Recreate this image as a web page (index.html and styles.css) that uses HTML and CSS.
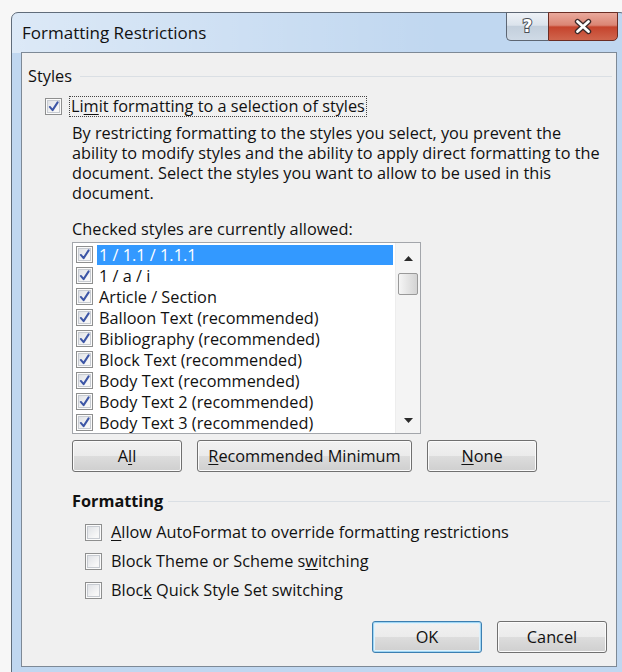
FILE: index.html
```html
<!DOCTYPE html>
<html lang="en">
<head>
<meta charset="utf-8">
<title>Formatting Restrictions</title>
<link rel="stylesheet" href="styles.css">
</head>
<body>
<div class="window">
  <div class="titlebar">
    <span class="title">Formatting Restrictions</span>
    <div class="caption-buttons">
      <span class="cap help"><span class="help-glyph">?</span></span>
      <span class="cap close">
        <svg width="22" height="17" viewBox="0 0 22 17" aria-hidden="true">
          <path d="M5.5 3.5 L16.5 13.5 M16.5 3.5 L5.5 13.5" stroke="#3b2a2a" stroke-width="5.4" stroke-linecap="round"/>
          <path d="M5.5 3.5 L16.5 13.5 M16.5 3.5 L5.5 13.5" stroke="#ffffff" stroke-width="2.8" stroke-linecap="round"/>
        </svg>
      </span>
    </div>
  </div>

  <div class="client">
    <section class="group">
      <div class="group-head"><span class="group-title">Styles</span><span class="rule"></span></div>

      <label class="check-row main-check">
        <span class="box checked"><svg viewBox="0 0 12 12"><path d="M2 6.5 L5 10 L10.5 1.5"/></svg></span>
        <span class="focus">Li<u>m</u>it formatting to a selection of styles</span>
      </label>

      <div class="indent">
        <p class="desc">By restricting formatting to the styles you select, you prevent the ability to modify styles and the ability to apply direct formatting to the document. Select the styles you want to allow to be used in this document.</p>
        <p class="list-label">Checked styles are currently allowed:</p>

        <div class="listbox">
          <ul class="items">
            <li class="item selected"><span class="box small checked"><svg viewBox="0 0 12 12"><path d="M2 6.5 L5 10 L10.5 1.5"/></svg></span><span class="item-text">1 / 1.1 / 1.1.1</span></li>
            <li class="item"><span class="box small checked"><svg viewBox="0 0 12 12"><path d="M2 6.5 L5 10 L10.5 1.5"/></svg></span><span class="item-text">1 / a / i</span></li>
            <li class="item"><span class="box small checked"><svg viewBox="0 0 12 12"><path d="M2 6.5 L5 10 L10.5 1.5"/></svg></span><span class="item-text">Article / Section</span></li>
            <li class="item"><span class="box small checked"><svg viewBox="0 0 12 12"><path d="M2 6.5 L5 10 L10.5 1.5"/></svg></span><span class="item-text">Balloon Text (recommended)</span></li>
            <li class="item"><span class="box small checked"><svg viewBox="0 0 12 12"><path d="M2 6.5 L5 10 L10.5 1.5"/></svg></span><span class="item-text">Bibliography (recommended)</span></li>
            <li class="item"><span class="box small checked"><svg viewBox="0 0 12 12"><path d="M2 6.5 L5 10 L10.5 1.5"/></svg></span><span class="item-text">Block Text (recommended)</span></li>
            <li class="item"><span class="box small checked"><svg viewBox="0 0 12 12"><path d="M2 6.5 L5 10 L10.5 1.5"/></svg></span><span class="item-text">Body Text (recommended)</span></li>
            <li class="item"><span class="box small checked"><svg viewBox="0 0 12 12"><path d="M2 6.5 L5 10 L10.5 1.5"/></svg></span><span class="item-text">Body Text 2 (recommended)</span></li>
            <li class="item"><span class="box small checked"><svg viewBox="0 0 12 12"><path d="M2 6.5 L5 10 L10.5 1.5"/></svg></span><span class="item-text">Body Text 3 (recommended)</span></li>
          </ul>
          <div class="scrollbar">
            <span class="arrow up"><svg width="9" height="5" viewBox="0 0 9 5"><path d="M0 5 L4.5 0 L9 5 Z"/></svg></span>
            <span class="track"><span class="thumb"></span></span>
            <span class="arrow down"><svg width="9" height="5" viewBox="0 0 9 5"><path d="M0 0 L9 0 L4.5 5 Z"/></svg></span>
          </div>
        </div>

        <div class="list-buttons">
          <span class="btn narrow">A<u>l</u>l</span>
          <span class="btn wide"><u>R</u>ecommended Minimum</span>
          <span class="btn narrow"><u>N</u>one</span>
        </div>
      </div>
    </section>

    <section class="group formatting">
      <div class="group-head sub"><span class="group-title bold">Formatting</span><span class="rule"></span></div>
      <div class="options">
        <label class="check-row"><span class="box"></span><span class="opt-text"><u>A</u>llow AutoFormat to override formatting restrictions</span></label>
        <label class="check-row"><span class="box"></span><span class="opt-text">Block Theme or Scheme s<u>w</u>itching</span></label>
        <label class="check-row"><span class="box"></span><span class="opt-text">Bloc<u>k</u> Quick Style Set switching</span></label>
      </div>
    </section>

    <div class="dialog-buttons">
      <span class="btn narrow default">OK</span>
      <span class="btn narrow">Cancel</span>
    </div>
  </div>
</div>
</body>
</html>
```

FILE: styles.css
```css
html, body {
  margin: 0;
  height: 100%;
}

body {
  background: #f7f7f7;
  overflow: hidden;
  font-family: "Open Sans", "Noto Sans", sans-serif;
  font-size: 16.3px;
  color: #111;
}

u {
  text-decoration-thickness: 1px;
  text-underline-offset: 2px;
}

/* ---------- window frame ---------- */
.window {
  margin: 12px 0 0 11px;
  width: 596px;
  height: 654px;
  padding: 0 9px 6px;
  border: 1px solid #606c7a;
  border-radius: 7px 7px 0 0;
  background:
    linear-gradient(90deg, rgba(255, 255, 255, 0.45), rgba(255, 255, 255, 0) 70%) top / 100% 40px no-repeat,
    #c0d7f0;
  display: flex;
  flex-direction: column;
}

.titlebar {
  height: 39px;
  display: flex;
  justify-content: space-between;
  align-items: flex-start;
}

.title {
  margin: 10px 0 0 1px;
  font-size: 17px;
  line-height: 20px;
  color: #111;
}

.caption-buttons {
  display: flex;
  margin: -1px -1px 0 0;
}

.cap {
  height: 27px;
  border: 1px solid #5d6673;
  display: flex;
  align-items: center;
  justify-content: center;
}

.help {
  width: 41px;
  border-right: none;
  border-radius: 0 0 0 5px;
  background: linear-gradient(#eef2f7, #dbe3ec 45%, #c3cfdc 50%, #cfdae6);
}

.help-glyph {
  font-family: "DejaVu Sans", sans-serif;
  font-weight: bold;
  font-size: 17px;
  line-height: 1;
  color: #fff;
  -webkit-text-stroke: 2px #4a4f57;
  paint-order: stroke fill;
}

.close {
  width: 68px;
  border-color: #6b2d24;
  border-radius: 0 0 5px 0;
  background: linear-gradient(#e9a99c, #db8574 45%, #c5442d 52%, #d0654d);
}

/* ---------- client area ---------- */
.client {
  flex: 1;
  border: 1px solid #7d8996;
  background: #f0f0f0;
  padding: 13px 4px 0 6px;
  display: flex;
  flex-direction: column;
}

.group-head {
  display: flex;
  align-items: center;
  height: 20px;
}

.group-title {
  line-height: 20px;
}

.bold {
  font-weight: 700;
}

.rule {
  flex: 1;
  height: 1px;
  margin-left: 8px;
  background: #dadfe4;
}

.group-head.sub {
  margin-left: 44px;
  margin-right: 2px;
}

.group-head.sub .rule {
  margin-left: 5px;
}

/* ---------- check boxes ---------- */
.check-row {
  display: flex;
  align-items: center;
  height: 20px;
}

.box {
  flex: none;
  box-sizing: border-box;
  width: 17px;
  height: 17px;
  border: 1px solid #8e8f8f;
  background: linear-gradient(135deg, #dadde2, #f7f7f7 70%);
  box-shadow: inset 0 0 0 1px #fbfbfb, inset 0 0 0 2px #c7cbd1;
  display: flex;
  align-items: center;
  justify-content: center;
}

.box svg {
  width: 11px;
  height: 11px;
}

.box svg path {
  fill: none;
  stroke: #3d56a6;
  stroke-width: 2.2;
  stroke-linecap: round;
  stroke-linejoin: round;
}

.main-check {
  margin: 10px 0 0 17px;
}

.focus {
  margin-left: 7px;
  padding: 0 1px;
  line-height: 19px;
  border: 1px dotted #444;
}

.indent {
  margin-left: 44px;
}

.desc {
  margin: 7px 0 0;
  width: 538px;
  line-height: 20px;
}

.list-label {
  margin: 16px 0 0;
  line-height: 20px;
}

/* ---------- list box ---------- */
.listbox {
  margin-top: 3px;
  width: 347px;
  height: 190px;
  border: 1px solid #a3a6ab;
  background: #fff;
  display: flex;
}

.items {
  list-style: none;
  margin: 0;
  padding: 1px 0 0 3px;
  flex: 1;
  overflow: hidden;
}

.item {
  display: flex;
  align-items: center;
  height: 21px;
}

.box.small {
  width: 17px;
  height: 17px;
}

.item-text {
  margin-left: 4px;
  padding: 0 2px;
  line-height: 20px;
  flex: 1;
  white-space: nowrap;
}

.item.selected .item-text {
  background: #3399ff;
  color: #fff;
}

.scrollbar {
  width: 24px;
  margin-left: 2px;
  display: flex;
  flex-direction: column;
  align-items: center;
  background: #f4f4f4;
  border-left: 1px solid #ededed;
}

.arrow {
  display: flex;
  align-items: center;
  justify-content: center;
}

.arrow.up {
  height: 30px;
}

.arrow.down {
  height: 26px;
}

.arrow svg path {
  fill: #2b2b2b;
}

.track {
  flex: 1;
  align-self: stretch;
  display: flex;
  justify-content: center;
}

.thumb {
  box-sizing: border-box;
  width: 20px;
  height: 22px;
  border: 1px solid #999;
  border-radius: 2px;
  background: linear-gradient(90deg, #f5f5f5, #e4e4e4 50%, #d3d3d3);
}

/* ---------- push buttons ---------- */
.btn {
  box-sizing: border-box;
  height: 32px;
  border: 1px solid #707070;
  border-radius: 3px;
  background: linear-gradient(#f2f2f2, #ebebeb 50%, #dddddd 50%, #cfcfcf);
  box-shadow: inset 0 0 0 1px #fbfbfb;
  display: flex;
  align-items: center;
  justify-content: center;
  line-height: 20px;
}

.btn.narrow {
  width: 110px;
}

.btn.wide {
  width: 215px;
}

.btn.default {
  border-color: #3c7fb1;
  box-shadow: inset 0 0 0 1px #9fd5f3, inset 0 0 0 2px #dff2fc;
}

.list-buttons {
  display: flex;
  gap: 15px;
  margin-top: 6px;
}

/* ---------- formatting options ---------- */
.formatting {
  margin-top: 19px;
}

.options {
  margin: 11px 0 0 57px;
  display: flex;
  flex-direction: column;
  gap: 9px;
}

.opt-text {
  margin-left: 9px;
  line-height: 20px;
}

.dialog-buttons {
  display: flex;
  justify-content: flex-end;
  gap: 15px;
  margin: 21px 5px 0 0;
}
```
